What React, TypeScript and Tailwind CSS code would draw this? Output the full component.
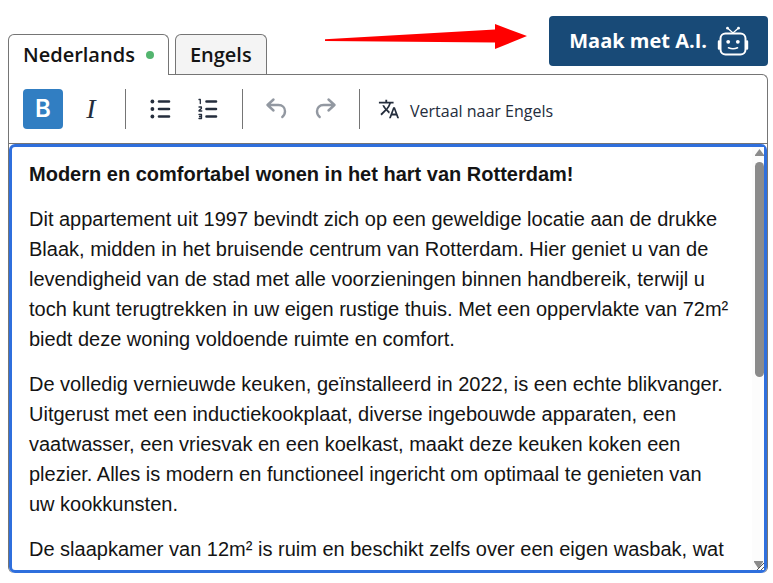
import { MdTranslate } from 'react-icons/md';

const paragraphs: string[] = [
  'Dit appartement uit 1997 bevindt zich op een geweldige locatie aan de drukke Blaak, midden in het bruisende centrum van Rotterdam. Hier geniet u van de levendigheid van de stad met alle voorzieningen binnen handbereik, terwijl u toch kunt terugtrekken in uw eigen rustige thuis. Met een oppervlakte van 72m² biedt deze woning voldoende ruimte en comfort.',
  'De volledig vernieuwde keuken, geïnstalleerd in 2022, is een echte blikvanger. Uitgerust met een inductiekookplaat, diverse ingebouwde apparaten, een vaatwasser, een vriesvak en een koelkast, maakt deze keuken koken een plezier. Alles is modern en functioneel ingericht om optimaal te genieten van uw kookkunsten.',
  'De slaapkamer van 12m² is ruim en beschikt zelfs over een eigen wasbak, wat',
];

const RobotIcon = () => (
  <svg width="32" height="32" viewBox="0 0 32 32" fill="none" stroke="currentColor" strokeLinecap="round">
    <rect x="3.500" y="8.500" width="25" height="21" rx="5" strokeWidth="2" />
    <path d="M2 16.500v7M30 16.500v7" strokeWidth="2.400" />
    <path d="M11 3.500l5 4.500 5-4.500" strokeWidth="1.300" />
    <circle cx="10.500" cy="3.200" r="1.400" fill="currentColor" stroke="none" />
    <circle cx="21.500" cy="3.200" r="1.400" fill="currentColor" stroke="none" />
    <circle cx="11.200" cy="16.800" r="1.900" fill="currentColor" stroke="none" />
    <circle cx="20.800" cy="16.800" r="1.900" fill="currentColor" stroke="none" />
    <path d="M11.500 22.800q4.500 2 9 0" strokeWidth="1.600" />
  </svg>
);

const BulletListIcon = () => (
  <svg width="24" height="24" viewBox="0 0 24 24" fill="currentColor" stroke="currentColor" strokeLinecap="round">
    <path d="M11 4.500h10M11 12h10M11 19.500h10" strokeWidth="2.600" />
    <g stroke="none">
      <circle cx="4.400" cy="4.500" r="1.900" />
      <circle cx="4.400" cy="12" r="1.900" />
      <circle cx="4.400" cy="19.500" r="1.900" />
    </g>
  </svg>
);

const NumberedListIcon = () => (
  <svg width="24" height="24" viewBox="0 0 24 24" fill="none" stroke="currentColor" strokeLinecap="round">
    <path d="M10.500 4.500h9.500M10.500 12h9.500M10.500 19.500h9.500" strokeWidth="2.600" />
    <path
      d="M3 2.500h1.300v4M3 10h2.400v1.500L3 13.500v.500h2.800M3 17.500h2.500v4H3M3.500 19.500h2"
      strokeWidth="1.300"
      strokeLinejoin="round"
    />
  </svg>
);

const UndoIcon = () => (
  <svg width="24" height="24" viewBox="0 0 24 24" fill="none" stroke="currentColor" strokeWidth="2.400" strokeLinecap="round" strokeLinejoin="round">
    <path d="M8.500 2.500L2.500 8l6 5.500M2.500 8h11c4 0 6.500 2.800 6.500 6.300 0 2.400-1 4.400-2.700 5.700" />
  </svg>
);

const RedoIcon = () => (
  <svg width="24" height="24" viewBox="0 0 24 24" fill="none" stroke="currentColor" strokeWidth="2.400" strokeLinecap="round" strokeLinejoin="round">
    <path d="M15.500 2.500l6 5.500-6 5.500M21.500 8h-11C6.500 8 4 10.800 4 14.300c0 2.400 1 4.400 2.700 5.700" />
  </svg>
);

const toolButton = 'flex size-10 items-center justify-center rounded';

const App: React.FC = () => {
  return (
    <div className="flex h-screen flex-col bg-white pt-4 pr-[5px] pb-[10px] pl-2 font-['Open_Sans',sans-serif] text-[#141414]">
      <header className="flex items-end">
        <div role="tablist" className="relative flex items-end gap-[6px] text-xl font-semibold">
          <button
            role="tab"
            aria-selected="true"
            className="-mb-px flex h-[41px] items-center gap-[11px] rounded-t-md border border-b-0 border-[#757575] bg-white px-[14px]"
          >
            Nederlands
            <span className="size-2 rounded-full bg-[#53b56f]" />
          </button>
          <button
            role="tab"
            aria-selected="false"
            className="flex h-10 items-center rounded-t-md border border-b-0 border-[#757575] bg-[#f4f4f4] px-[14px]"
          >
            Engels
          </button>
        </div>
        <svg width="202" height="26" viewBox="0 0 202 26" fill="#ff0000" className="mb-6 ml-auto">
          <path d="M0 15.300L170 5.500V0l32 12-32 13v-6.500L0 17z" />
        </svg>
        <button className="mb-2 ml-[22px] flex h-[50px] items-center gap-[10px] rounded bg-[#184a77] pr-[19px] pl-5 text-xl font-bold text-white">
          Maak met A.I.
          <RobotIcon />
        </button>
      </header>

      <section className="flex min-h-0 flex-1 flex-col rounded-md rounded-tl-none border border-[#757575] border-b-0">
        <div role="toolbar" className="flex items-center border-b border-[#757575] px-[14px] py-[14px] text-[#242d3c]">
          <button aria-label="Vet" className={`${toolButton} bg-[#317ec2] font-['Inter',sans-serif] text-2xl font-semibold text-white`}>
            B
          </button>
          <button aria-label="Cursief" className={`${toolButton} ml-2 font-['Liberation_Serif',serif] text-[28px] italic`}>
            I
          </button>
          <span className="ml-[14px] h-10 w-px bg-[#757575]" />
          <button aria-label="Opsomming" className={`${toolButton} ml-[14px]`}>
            <BulletListIcon />
          </button>
          <button aria-label="Genummerde lijst" className={`${toolButton} ml-2`}>
            <NumberedListIcon />
          </button>
          <span className="ml-[14px] h-10 w-px bg-[#757575]" />
          <button aria-label="Ongedaan maken" className={`${toolButton} ml-[14px] text-[#9298a1]`}>
            <UndoIcon />
          </button>
          <button aria-label="Opnieuw" className={`${toolButton} ml-2 text-[#9298a1]`}>
            <RedoIcon />
          </button>
          <span className="ml-[14px] h-10 w-px bg-[#757575]" />
          <button className="ml-[18px] flex h-10 items-center gap-[10px] text-base">
            <MdTranslate size={22} />
            <span className="pt-[3px]">Vertaal naar Engels</span>
          </button>
        </div>

        <div className="flex min-h-0 flex-1 rounded-md border-[3px] border-[#2f6fdd]">
          <div
            role="textbox"
            aria-multiline="true"
            aria-label="Omschrijving"
            className="min-w-0 flex-1 space-y-[15px] overflow-hidden py-3 pr-[22px] pl-[17px] font-['Liberation_Sans',sans-serif] text-xl leading-[30px]"
          >
            <p className="font-bold">Modern en comfortabel wonen in het hart van Rotterdam!</p>
            {paragraphs.map((text, index) => (
              <p key={index}>{text}</p>
            ))}
          </div>
          <div aria-hidden="true" className="flex w-3 flex-col items-end justify-between bg-[#fcfcfc] pt-[2px]">
            <div className="flex flex-col items-center gap-[6px]">
              <svg width="9" height="7" viewBox="0 0 9 7" fill="#8b8b8b">
                <path d="M4.500 0L9 6v1H0V6z" />
              </svg>
              <span className="h-[215px] w-[9px] rounded-full bg-[#8b8b8b]" />
            </div>
            <svg width="12" height="10" viewBox="0 0 12 10">
              <path d="M2 1h9v1L7 8H6L2 2z" fill="#8b8b8b" />
              <path d="M5 10l7-7M9 10l3-3" stroke="#555" />
            </svg>
          </div>
        </div>
      </section>
    </div>
  );
};

export default App;
